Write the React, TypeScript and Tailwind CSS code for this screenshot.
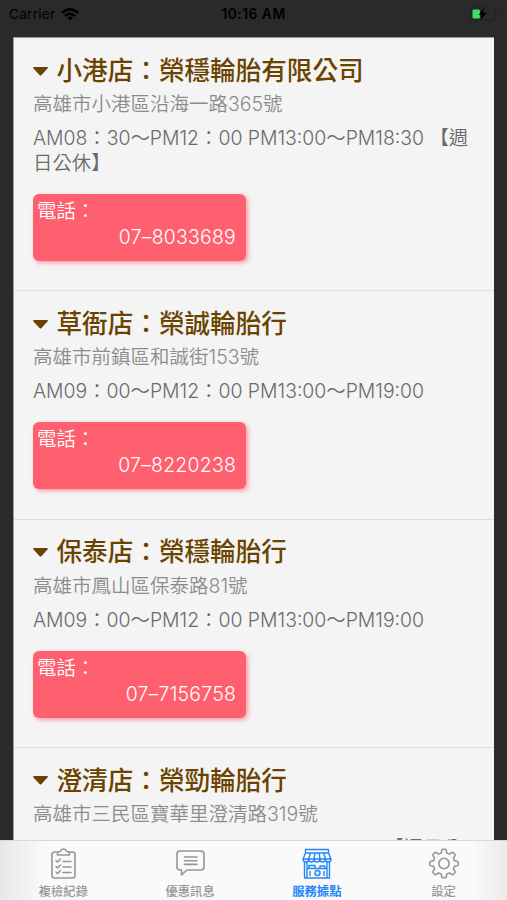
import React from "react";

const shops = [
  { name: "小港店：榮穩輪胎有限公司", address: "高雄市小港區沿海一路365號", hours: ["AM08：30～PM12：00 PM13:00～PM18:30 【週", "日公休】"], tel: "07–8033689" },
  { name: "草衙店：榮誠輪胎行", address: "高雄市前鎮區和誠街153號", hours: ["AM09：00～PM12：00 PM13:00～PM19:00"], tel: "07–8220238" },
  { name: "保泰店：榮穩輪胎行", address: "高雄市鳳山區保泰路81號", hours: ["AM09：00～PM12：00 PM13:00～PM19:00"], tel: "07–7156758" },
  { name: "澄清店：榮勁輪胎行", address: "高雄市三民區寶華里澄清路319號", hours: ["AM9:00～PM12:00 PM13:00～PM19:00【週日公"], tel: "" },
];

function Shop({ shop }: { shop: (typeof shops)[number] }) {
  return (
    <section className="border-b border-[#dedede] px-[19px] pt-[15px] pb-[29.300px]">
      <h2 className="flex h-[36px] items-center whitespace-nowrap text-[25.6px] font-medium text-[#6b4300]">
        <svg className="mr-[8.500px] h-[9px] w-[15px] shrink-0" viewBox="0 0 15 9" fill="currentColor">
          <path d="M1 0H14Q15.500 .4 14.500 1.500L8.500 8Q7.500 9 6.500 8L.5 1.500Q-.5 .4 1 0Z" />
        </svg>
        {shop.name}
      </h2>
      <p className="h-[30px] whitespace-nowrap text-[19.500px] leading-[30px] font-[350] text-[#8c8c8c]">{shop.address}</p>
      <div className="mt-[7px] text-[19.4px] leading-[25px] font-[350] text-[#6a6a6a]">
        {shop.hours.map((line) => (
          <p key={line} className="h-[25px] whitespace-nowrap">{line}</p>
        ))}
      </div>
      {shop.tel && (
        <div className="mt-[18px] h-[67px] w-[213px] rounded-[6px] bg-[#ff606f] text-[19.4px] font-[350] text-white shadow-[2px_2px_4px_rgba(255,70,90,0.5)]">
          <p className="h-[31px] pt-[4px] pl-[4px] leading-[27px]">電話：</p>
          <p className="pr-[10px] text-right leading-[25px] tracking-[0.25px]">{shop.tel}</p>
        </div>
      )}
    </section>
  );
}

function ListIcon() {
  return (
    <svg className="h-[32px] w-[30px]" viewBox="0 0 30 32" fill="none" stroke="currentColor" strokeWidth="1.6" strokeLinecap="round" strokeLinejoin="round">
      <path d="M9.500 4H6.500Q4 4 4 6.500V27.500Q4 30 6.500 30H24.500Q27 30 27 27.500V6.500Q27 4 24.500 4H21.500" />
      <path d="M9.500 7V5Q9.500 3.800 11.500 3.600Q13 3.400 13 2.500Q13.500 1 15.500 1T18 2.500Q18 3.400 19.500 3.600Q21.500 3.800 21.500 5V7Z" />
      <path d="M8 12.500l1.500 1.500 3-3M8 18.500l1.500 1.500 3-3M8 24l1.500 1.500 3-3M15 13.500h8M15 19h8M15 24.500h8" />
    </svg>
  );
}

function MessageIcon() {
  return (
    <svg className="h-[32px] w-[30px]" viewBox="0 0 30 32" fill="none" stroke="currentColor" strokeWidth="1.6" strokeLinecap="round" strokeLinejoin="round">
      <path d="M5 3H26Q29 3 29 6V19Q29 22 26 22H12L6.500 27V22H5Q2 22 2 19V6Q2 3 5 3Z" />
      <path d="M9.500 9h12.500M9.500 12.700h12.500M9.500 16.400h12.500" />
    </svg>
  );
}

function StoreIcon() {
  return (
    <svg className="h-[32px] w-[30px]" viewBox="0 0 30 32" fill="none" stroke="currentColor" strokeWidth="1.4" strokeLinejoin="round">
      <path d="M3.500 5V1.500H26.500V5M3.500 5H26.500L29 11H1ZM8.500 5L6.500 11M13 5L12 11M17 5L18 11M21.500 5L23.500 11" />
      <path d="M1 11q0 3 2.800 3t2.800-3q0 3 2.800 3t2.800-3q0 3 2.800 3t2.800-3q0 3 2.800 3t2.800-3q0 3 2.800 3t2.800-3" />
      <path d="M2.500 14V30H27.500V14M5 14V30M25 14V30M5 20.500H25M7 20v-2.500h6V20M18 20v-2h5v2M8 23v5M22 23v5" />
      <circle cx="15.500" cy="25" r="2.500" />
    </svg>
  );
}

// Eight rounded lobes, one pointing straight up.
const gearOutline = Array.from({ length: 192 }, (_, i) => {
  const angle = (i / 192) * Math.PI * 2;
  const radius = 12.5 + 1.8 * Math.tanh(2.6 * Math.cos(8 * angle));
  return `${(15 + radius * Math.sin(angle)).toFixed(2)},${(15.5 - radius * Math.cos(angle)).toFixed(2)}`;
}).join(" ");

function GearIcon() {
  return (
    <svg className="h-[32px] w-[30px]" viewBox="0 0 30 32" fill="none" stroke="currentColor" strokeWidth="1.6" strokeLinejoin="round">
      <polygon points={gearOutline} />
      <circle cx="15" cy="15.500" r="5.200" />
    </svg>
  );
}

const tabs = [
  { label: "複檢紀錄", icon: <ListIcon />, active: false },
  { label: "優惠訊息", icon: <MessageIcon />, active: false },
  { label: "服務據點", icon: <StoreIcon />, active: true },
  { label: "設定", icon: <GearIcon />, active: false },
];

export default function App() {
  return (
    <div className="flex h-[900px] w-[507px] flex-col overflow-hidden bg-[#2a2a2a] font-[Inter,'Noto_Sans_CJK_TC',sans-serif]">
      <header className="grid h-[37px] shrink-0 grid-cols-3 items-start px-[9px] pt-[4px] text-[13px] leading-[20px] text-black">
        <div className="flex items-center gap-[6px]">
          <span className="text-[13.6px] tracking-[0.25px]">Carrier</span>
          <svg className="h-[13px] w-[18px]" viewBox="0 0 18 13" fill="none" stroke="currentColor" strokeWidth="2.500">
            <path d="M1 4.800Q9-2 17 4.800M4 8Q9 3.600 14 8" />
            <path d="M9 12.500L6.200 9.800Q9 7.400 11.800 9.800Z" fill="currentColor" stroke="none" />
          </svg>
        </div>
        <span className="text-center text-[13.800px] font-semibold tracking-[0.5px]">10:16 AM</span>
        <svg className="mt-[3px] -mr-[2px] h-[14px] w-[31px] justify-self-end" viewBox="0 0 31 14">
          <rect x="1.500" y="1" width="25" height="12" rx="3" fill="none" stroke="#1e1e1e" />
          <rect x="3.500" y="2.500" width="7.500" height="9" rx="1.500" fill="#43d965" />
          <path d="M15 1L9.500 8H13L11.500 13L18 5.800H14Z" fill="#000" />
          <path d="M28.500 5Q30.500 7 28.500 9Z" fill="#1e1e1e" />
        </svg>
      </header>
      <main className="mr-[13px] ml-[13px] min-h-0 flex-1 overflow-hidden border-t border-l border-[#999] bg-[#f4f4f4]">
        {shops.map((shop) => <Shop key={shop.name} shop={shop} />)}
      </main>
      <nav className="grid h-[60px] shrink-0 grid-cols-4 border-t border-[#d8d8d8] bg-[linear-gradient(to_right,#e8e7e7,#fafafa_9%,#fafafa_93%,#ebebeb)]">
        {tabs.map((tab) => (
          <div key={tab.label} className={tab.active ? "flex flex-col items-center pt-[7px] text-[#2487f8]" : "flex flex-col items-center pt-[7px] text-[#969696]"}>
            {tab.icon}
            <span className={tab.active ? "mt-[3px] text-[12.300px] leading-[17px] font-bold" : "mt-[3px] text-[12.300px] leading-[17px] font-medium"}>{tab.label}</span>
          </div>
        ))}
      </nav>
    </div>
  );
}
